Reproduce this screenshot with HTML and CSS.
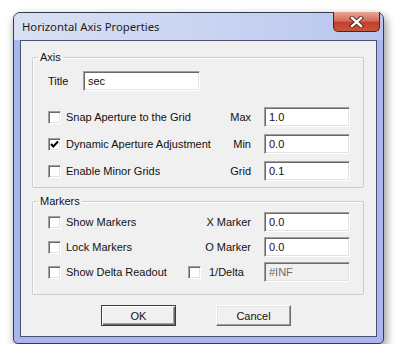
FILE: index.html
```html
<!DOCTYPE html>
<html lang="en">
<head>
    <meta charset="UTF-8">
    <link rel="stylesheet" href="styles.css">
</head>
<body>
    <div class="window">
        <div class="titlebar">
            <span class="caption">Horizontal Axis Properties</span>
            <button class="close" aria-label="Close">
                <svg width="15" height="12" viewBox="0 0 15 12">
                    <path d="M3 2 L12 10 M12 2 L3 10" stroke="#4a1d18" stroke-width="4.2" stroke-linecap="square"/>
                    <path d="M3 2 L12 10 M12 2 L3 10" stroke="#fff" stroke-width="2.4" stroke-linecap="square"/>
                </svg>
            </button>
        </div>

        <div class="client">
            <fieldset class="group axis">
                <legend>Axis</legend>
                <div class="title-row">
                    <label class="plain">Title</label>
                    <input class="edit title-edit" value="sec">
                </div>
                <div class="rows">
                    <label class="check"><span class="box"></span>Snap Aperture to the Grid</label>
                    <span class="field-label">Max</span>
                    <input class="edit" value="1.0">

                    <label class="check"><span class="box">
                        <svg width="11" height="11" viewBox="0 0 11 11"><path d="M2 5 L4.3 7.5 L9 2.5" fill="none" stroke="#000" stroke-width="2"/></svg>
                    </span>Dynamic Aperture Adjustment</label>
                    <span class="field-label">Min</span>
                    <input class="edit" value="0.0">

                    <label class="check"><span class="box"></span>Enable Minor Grids</label>
                    <span class="field-label">Grid</span>
                    <input class="edit" value="0.1">
                </div>
            </fieldset>

            <fieldset class="group markers">
                <legend>Markers</legend>
                <div class="rows">
                    <label class="check"><span class="box"></span>Show Markers</label>
                    <span class="field-label">X Marker</span>
                    <input class="edit" value="0.0">

                    <label class="check"><span class="box"></span>Lock Markers</label>
                    <span class="field-label">O Marker</span>
                    <input class="edit" value="0.0">

                    <label class="check"><span class="box"></span>Show Delta Readout</label>
                    <label class="check delta"><span class="box"></span>1/Delta</label>
                    <input class="edit" value="#INF" disabled>
                </div>
            </fieldset>

            <div class="buttons">
                <button class="btn default">OK</button>
                <button class="btn">Cancel</button>
            </div>
        </div>
    </div>
</body>
</html>
```

FILE: styles.css
```css
body {
    margin: 0;
    background-color: #fff;
    font-family: 'Liberation Sans', Arial, sans-serif;
    font-size: 11px;
    color: #111;
}
.window {
    width: 369px;
    margin: 12px 0 0 13px;
    border: 1px solid #383c4a;
    border-radius: 7px 7px 5px 5px;
    background-color: #a9b5ec;
    box-shadow: 2px 4px 10px rgba(0,0,0,0.45);
}
.titlebar {
    height: 27px;
    display: flex;
    justify-content: space-between;
    align-items: flex-start;
    padding-left: 8px;
    border-radius: 6px 6px 0 0;
    background: linear-gradient(to right, #d8e0f3, #ccd6f2 45%, #b9c5ef);
}
.caption {
    font-family: 'Noto Sans', 'Liberation Sans', sans-serif;
    font-size: 11.3px;
    line-height: 28px;
    color: #1b1b1b;
}
.close {
    width: 47px;
    height: 20px;
    margin: -1px 3px 0 0;
    padding: 0;
    display: flex;
    align-items: center;
    justify-content: center;
    border: 1px solid #4d2420;
    border-top: none;
    border-radius: 0 0 5px 5px;
    background: linear-gradient(#e7a797, #d66e5c 45%, #c2412e 55%, #c7553c);
}
.client {
    margin: 0 6px 6px;
    padding: 9px 0 10px 11px;
    border: 1px solid #4a5470;
    background-color: #f0f0f0;
}
.group {
    width: 332px;
    box-sizing: border-box;
    margin: 0;
    padding: 7px 13px 6px 15px;
    border: 1px solid #cdcdcd;
    border-radius: 2px;
    box-shadow: inset 1px 1px 0 #fff;
}
.group legend {
    margin-left: -10px;
    padding: 0 2px;
    line-height: 14px;
}
.markers {
    margin-top: 6px;
    padding-top: 4px;
    padding-bottom: 12px;
}
.title-row {
    display: flex;
    align-items: center;
    height: 20px;
    margin-bottom: 16px;
}
.plain {
    width: 35px;
}
.rows {
    display: grid;
    grid-template-columns: minmax(0, 1fr) 65px 86px;
    grid-auto-rows: 20px;
    column-gap: 11px;
    row-gap: 7px;
    align-items: center;
}
.markers .rows {
    row-gap: 5px;
}
.check {
    display: flex;
    align-items: center;
    gap: 5px;
    white-space: nowrap;
}
.check.delta {
    gap: 8px;
}
.box {
    flex-shrink: 0;
    width: 13px;
    height: 13px;
    box-sizing: border-box;
    display: flex;
    align-items: center;
    justify-content: center;
    border: 1px solid;
    border-color: #a0a0a0 #fff #fff #a0a0a0;
    box-shadow: inset 1px 1px 0 #696969, inset -1px -1px 0 #e3e3e3;
    background-color: #fff;
}
.field-label {
    padding-right: 2px;
    text-align: right;
    white-space: nowrap;
}
.edit {
    width: 86px;
    height: 20px;
    box-sizing: border-box;
    margin: 0;
    padding: 0 4px;
    border: 1px solid;
    border-color: #a0a0a0 #fff #fff #a0a0a0;
    box-shadow: inset 1px 1px 0 #696969, inset -1px -1px 0 #e3e3e3;
    background-color: #fff;
    font-family: inherit;
    font-size: 11px;
    color: #111;
    outline: none;
}
.edit:disabled {
    background-color: #f0f0f0;
    color: #6d6d6d;
}
.title-edit {
    width: 117px;
    padding-left: 4px;
}
.buttons {
    display: flex;
    justify-content: center;
    gap: 40px;
    margin-top: 10px;
    padding-right: 16px;
}
.btn {
    width: 75px;
    height: 21px;
    margin: 0;
    padding: 0;
    border: 1px solid;
    border-color: #fff #696969 #696969 #fff;
    box-shadow: inset -1px -1px 0 #a0a0a0, inset 1px 1px 0 #e3e3e3;
    background-color: #f0f0f0;
    font-family: inherit;
    font-size: 11px;
    color: #111;
}
.btn.default {
    border-color: #3c3c3c;
    box-shadow: inset 1px 1px 0 #fff, inset -1px -1px 0 #696969, inset -2px -2px 0 #a0a0a0;
}
```
